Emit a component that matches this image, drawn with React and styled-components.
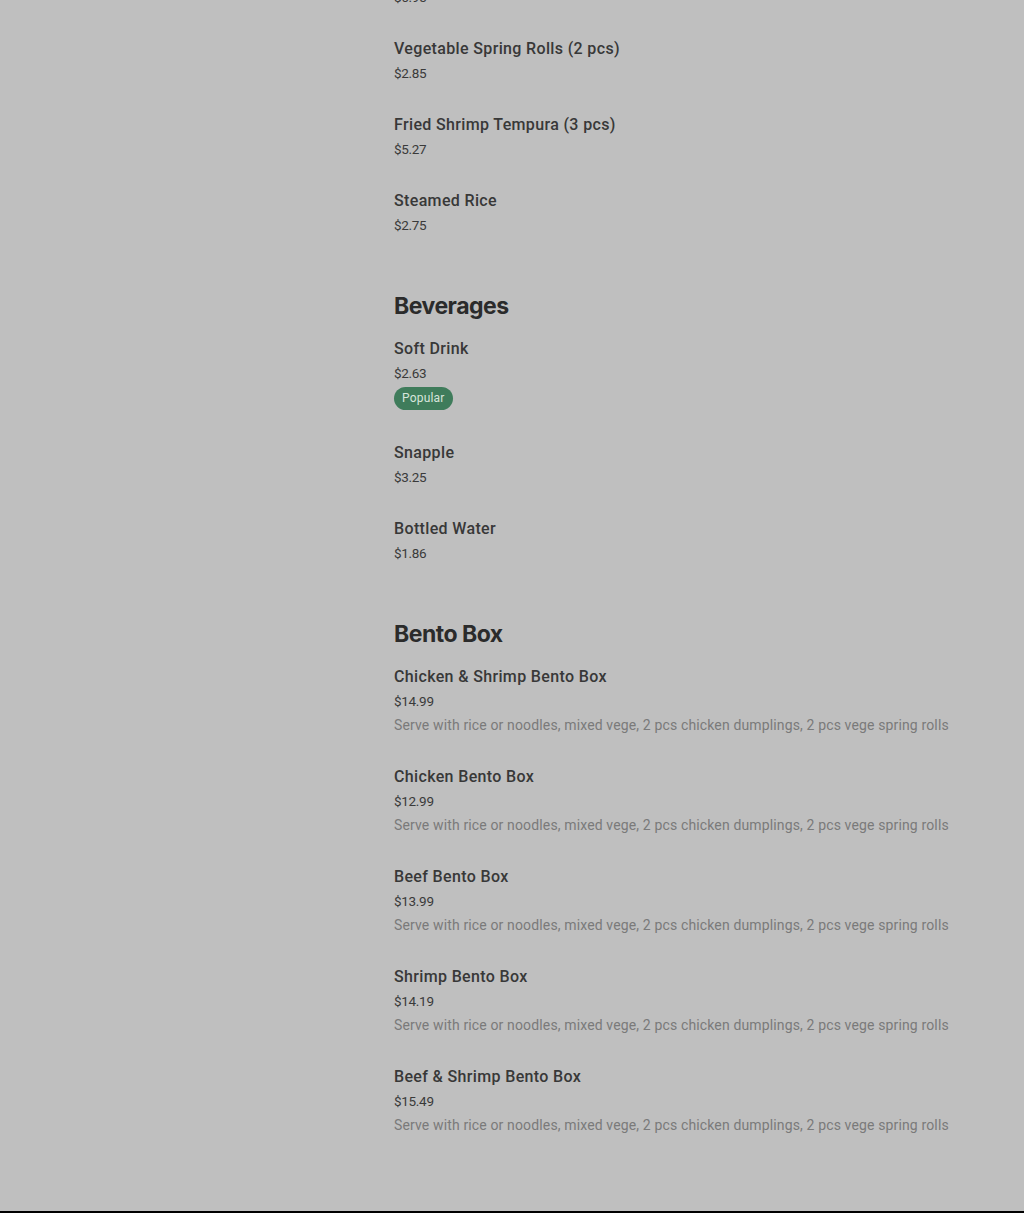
import styled, { createGlobalStyle } from "styled-components";

const GlobalStyle = createGlobalStyle`
  html, body {
    margin: 0;
    padding: 0;
    background: #bfbfbf;
  }
  body {
    font-family: Roboto, "Liberation Sans", sans-serif;
    -webkit-font-smoothing: antialiased;
  }
`;

const menu = [
  {
    title: "Appetizers",
    hidden: true,
    items: [
      { name: "Chicken Dumplings (4 pcs)", price: "$6.95" },
      { name: "Vegetable Spring Rolls (2 pcs)", price: "$2.85" },
      { name: "Fried Shrimp Tempura (3 pcs)", price: "$5.27" },
      { name: "Steamed Rice", price: "$2.75" },
    ],
  },
  {
    title: "Beverages",
    items: [
      { name: "Soft Drink", price: "$2.63", popular: true },
      { name: "Snapple", price: "$3.25" },
      { name: "Bottled Water", price: "$1.86" },
    ],
  },
  {
    title: "Bento Box",
    items: [
      { name: "Chicken & Shrimp Bento Box", price: "$14.99", desc: true },
      { name: "Chicken Bento Box", price: "$12.99", desc: true },
      { name: "Beef Bento Box", price: "$13.99", desc: true },
      { name: "Shrimp Bento Box", price: "$14.19", desc: true },
      { name: "Beef & Shrimp Bento Box", price: "$15.49", desc: true },
    ],
  },
];

const BENTO_DESC =
  "Serve with rice or noodles, mixed vege, 2 pcs chicken dumplings, 2 pcs vege spring rolls";

const Page = styled.div`
  display: grid;
  grid-template-columns: 370px 1fr;
  column-gap: 24px;
  padding-bottom: 74px;
`;

const Sidebar = styled.aside``;

const Content = styled.main`
  display: flex;
  flex-direction: column;
  gap: 53px;
  margin-top: -86px;
`;

const Section = styled.section`
  display: flex;
  flex-direction: column;
`;

const SectionTitle = styled.h2`
  margin: 0 0 14px;
  font-family: Inter, Roboto, sans-serif;
  font-size: 23px;
  line-height: 32px;
  font-weight: 700;
  letter-spacing: -0.5px;
  color: #2b2b2b;
  visibility: ${(p) => (p.$hidden ? "hidden" : "visible")};
`;

const ItemList = styled.ul`
  margin: 0;
  padding: 0;
  list-style: none;
  display: flex;
  flex-direction: column;
  gap: 27px;
`;

const Item = styled.li`
  display: flex;
  flex-direction: column;
  align-items: flex-start;
`;

const Name = styled.div`
  padding-top: 1px;
  font-size: 16px;
  line-height: 24px;
  font-weight: 500;
  letter-spacing: 0.35px;
  color: #383838;
`;

const Price = styled.div`
  font-size: 13.5px;
  line-height: 24px;
  color: #3a3a3a;
  letter-spacing: -0.3px;
`;

const Desc = styled.div`
  font-size: 14px;
  line-height: 24px;
  color: #7a7a7a;
  letter-spacing: 0.14px;
`;

const Badge = styled.span`
  margin: 2px 0 3px;
  height: 23px;
  padding: 0 8px;
  border-radius: 12px;
  background: #3f7c5b;
  color: #d7e5db;
  font-size: 12px;
  line-height: 23px;
  letter-spacing: 0.2px;
`;

const Footer = styled.footer`
  height: 2px;
  background: #000;
`;

export default function App() {
  return (
    <>
      <GlobalStyle />
      <Page>
        <Sidebar />
        <Content>
          {menu.map((section) => (
            <Section key={section.title}>
              <SectionTitle $hidden={section.hidden}>{section.title}</SectionTitle>
              <ItemList>
                {section.items.map((item) => (
                  <Item key={item.name}>
                    <Name>{item.name}</Name>
                    <Price>{item.price}</Price>
                    {item.desc && <Desc>{BENTO_DESC}</Desc>}
                    {item.popular && <Badge>Popular</Badge>}
                  </Item>
                ))}
              </ItemList>
            </Section>
          ))}
        </Content>
      </Page>
      <Footer />
    </>
  );
}
